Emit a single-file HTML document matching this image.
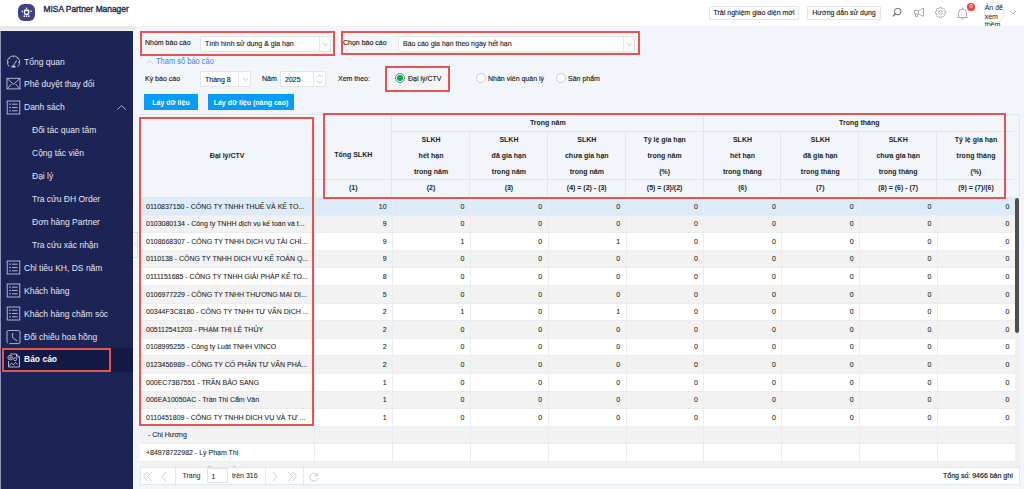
<!DOCTYPE html>
<html><head><meta charset="utf-8">
<style>
*{box-sizing:border-box;margin:0;padding:0}
html,body{width:1024px;height:489px;overflow:hidden;background:#f2f5f9;font-family:"Liberation Sans",sans-serif;color:#333}
.a{position:absolute}
#top{left:0;top:0;width:1024px;height:26px;background:#fff}
#logo{left:18px;top:4px;width:17px;height:17px;border-radius:6px;background:#40418a}
#title{left:43.5px;top:4px;font-size:8.4px;color:#1f2b4d;line-height:11px;-webkit-text-stroke:0.35px #1f2b4d;transform:scaleY(1.1)}
.tbtn{top:6px;height:14px;border:1px solid #e3e5e8;box-shadow:0 0 1px rgba(0,0,0,.06);border-radius:2px;background:#fff;font-size:7px;line-height:12px;text-align:center;color:#161616;-webkit-text-stroke:0.12px #161616}
#strip{left:0;top:26px;width:136px;height:4px;background:#e8e9eb}
#side{left:1px;top:31px;width:132px;height:458px;background:#1c2456}
#sideb{left:0;top:31px;width:1px;height:458px;background:#9096b8}
#gap{left:133px;top:30px;width:3px;height:459px;background:#f7f8fa}
.mtx{font-size:8.5px;line-height:12px;color:#e3e5ef;white-space:nowrap;transform:scaleY(1.1)}
.red{border:2px solid #e65450}
.lbl{font-size:7px;color:#161616;-webkit-text-stroke:0.12px currentColor;line-height:9px;white-space:nowrap;transform:scaleY(1.1)}
.sel{background:#fff;border:1px solid #e3e5e8;border-radius:1px;font-size:7px;line-height:14px;color:#161616;-webkit-text-stroke:0.12px #161616;padding-left:4px;white-space:nowrap}
.sel .dv{position:absolute;top:0;bottom:0;border-left:1px solid #e6e8eb}
.btn{background:#069cf8;color:#fff;font-weight:bold;font-size:7px;line-height:18px;text-align:center;white-space:nowrap}
.radio{width:10px;height:10px;border-radius:50%;border:1px solid #c9ccd1;background:#fff}
.hd{font-size:7px;font-weight:bold;color:#1d1d1d;text-align:center;line-height:10px;white-space:nowrap;transform:scaleY(1.1)}
.cell{font-size:7px;color:#1e1e1e;-webkit-text-stroke:0.08px #1e1e1e;line-height:10px;white-space:nowrap;transform:scaleY(1.1)}
.num{text-align:right;font-weight:normal}
</style></head><body>
<div id="top" class="a"></div>
<div id="logo" class="a"><svg width="17" height="17" viewBox="0 0 17 17"><g fill="#fff"><circle cx="8.5" cy="4.3" r="0.8"/><circle cx="4.3" cy="7.3" r="0.8"/><circle cx="13" cy="7.3" r="0.8"/><rect x="5.6" y="11.4" width="1.4" height="1.6"/><rect x="7.9" y="11.4" width="1.4" height="1.6"/><rect x="10.1" y="11.4" width="1.4" height="1.6"/><path d="M6 5.8h1.2v1H6zM9.9 5.8h1.2v1H9.9z"/></g><circle cx="8.6" cy="8.2" r="2.2" fill="none" stroke="#fff" stroke-width="1.3"/></svg></div>
<div id="title" class="a">MISA Partner Manager</div>
<div class="a tbtn" style="left:709px;width:90px"><span style="display:inline-block;transform:scaleY(1.1)">Trải nghiệm giao diện mới</span></div>
<div class="a tbtn" style="left:807px;width:74px"><span style="display:inline-block;transform:scaleY(1.1)">Hướng dẫn sử dụng</span></div>

<div id="strip" class="a"></div>
<div id="gap" class="a"></div>
<div id="sideb" class="a"></div>
<div id="side" class="a"></div>

<!-- content -->
<div class="a red" style="left:140px;top:31px;width:195px;height:25px"></div>
<div class="a lbl" style="left:145px;top:38px">Nhóm báo cáo</div>
<div class="a sel" style="left:200px;top:36px;width:131px;height:16px">Tình hình sử dụng &amp; gia hạn<span class="dv" style="left:118px"></span></div>

<div class="a red" style="left:341px;top:31px;width:299px;height:24px"></div>
<div class="a lbl" style="left:343px;top:38px">Chọn báo cáo</div>
<div class="a sel" style="left:398px;top:36px;width:237px;height:16px">Báo cáo gia hạn theo ngày hết hạn<span class="dv" style="left:224px"></span></div>

<div class="a lbl" style="left:156px;top:56.8px;color:#3b8ad8;font-size:7.5px;-webkit-text-stroke:0">Tham số báo cáo</div>

<div class="a lbl" style="left:145px;top:74px">Kỳ báo cáo</div>
<div class="a sel" style="left:200px;top:71px;width:51px;height:16px;line-height:15px">Tháng 8<span class="dv" style="left:37px"></span></div>
<div class="a lbl" style="left:262px;top:74px">Năm</div>
<div class="a sel" style="left:280px;top:71px;width:46px;height:16px;line-height:15px">2025<span class="dv" style="left:32px"></span></div>
<div class="a lbl" style="left:338px;top:74px">Xem theo:</div>
<div class="a red" style="left:385px;top:66px;width:65px;height:26px"></div>
<div class="a radio" style="left:395px;top:73px;border-color:#27a86a"><div style="position:absolute;left:1.2px;top:1.2px;width:5.6px;height:5.6px;border-radius:50%;background:#17a05c"></div></div>
<div class="a lbl" style="left:408px;top:74px">Đại lý/CTV</div>
<div class="a radio" style="left:476px;top:73px"></div>
<div class="a lbl" style="left:488px;top:74px">Nhân viên quản lý</div>
<div class="a radio" style="left:556px;top:73px"></div>
<div class="a lbl" style="left:568px;top:74px">Sản phẩm</div>

<div class="a btn" style="left:144px;top:94px;width:54px;height:16px">Lấy dữ liệu</div>
<div class="a btn" style="left:208px;top:94px;width:86px;height:16px">Lấy dữ liệu (nâng cao)</div>


<div class="a mtx" style="left:24px;top:55.5px">Tổng quan</div>
<div class="a" style="left:6px;top:54.0px"><svg width="15" height="15" viewBox="0 0 15 15"><g fill="none" stroke="#c9cce0" stroke-width="0.85"><path d="M3.2 12.6A6.2 6.2 0 1 1 11.8 12.6"/><path d="M7.5 2.3v1.1M3.4 4l.8.8M11.6 4l-.8.8M1.9 8.2h1.1M13.1 8.2h-1.1"/><path d="M7.6 11.2l2.8-4.3"/></g><path d="M5.3 13.4a2.2 2.2 0 0 1 4.4 0z" fill="#c9cce0"/><path d="M9.2 7.4l1.6-1.3-.6 2z" fill="#c9cce0"/></svg></div>
<div class="a mtx" style="left:24px;top:78.42px">Phê duyệt thay đổi</div>
<div class="a" style="left:6px;top:76.92px"><svg width="15" height="15" viewBox="0 0 15 15"><g fill="none" stroke="#c9cce0" stroke-width="0.85"><rect x="1" y="1.3" width="13" height="10.6"/><path d="M1.2 1.6l6.3 5.7 6.3-5.7M1.3 11.6l4.2-4.6M13.7 11.6l-4.2-4.6"/></g></svg></div>
<div class="a mtx" style="left:24px;top:101.34px">Danh sách</div>
<div class="a" style="left:6px;top:99.84px"><svg width="15" height="15" viewBox="0 0 15 15"><g fill="none" stroke="#c9cce0" stroke-width="0.85"><rect x="1.2" y="1" width="12.6" height="13"/><path d="M6 4.2h5.5M6 7.5h5.5M6 10.8h5.5"/></g><g fill="#c9cce0"><rect x="3.4" y="3.6" width="1.3" height="1.2"/><rect x="3.4" y="6.9" width="1.3" height="1.2"/><rect x="3.4" y="10.2" width="1.3" height="1.2"/></g></svg></div>
<div class="a mtx" style="left:32px;top:124.25999999999999px">Đối tác quan tâm</div>
<div class="a mtx" style="left:32px;top:147.18px">Cộng tác viên</div>
<div class="a mtx" style="left:32px;top:170.10000000000002px">Đại lý</div>
<div class="a mtx" style="left:32px;top:193.02px">Tra cứu ĐH Order</div>
<div class="a mtx" style="left:32px;top:215.94px">Đơn hàng Partner</div>
<div class="a mtx" style="left:32px;top:238.86px">Tra cứu xác nhận</div>
<div class="a mtx" style="left:24px;top:261.78000000000003px">Chỉ tiêu KH, DS năm</div>
<div class="a" style="left:6px;top:260.28000000000003px"><svg width="15" height="15" viewBox="0 0 15 15"><g fill="none" stroke="#c9cce0" stroke-width="0.85"><rect x="1.2" y="1" width="12.6" height="13"/><path d="M6 4.2h5.5M6 7.5h5.5M6 10.8h5.5"/></g><g fill="#c9cce0"><rect x="3.4" y="3.6" width="1.3" height="1.2"/><rect x="3.4" y="6.9" width="1.3" height="1.2"/><rect x="3.4" y="10.2" width="1.3" height="1.2"/></g></svg></div>
<div class="a mtx" style="left:24px;top:284.70000000000005px">Khách hàng</div>
<div class="a" style="left:6px;top:283.20000000000005px"><svg width="15" height="15" viewBox="0 0 15 15"><g fill="none" stroke="#c9cce0" stroke-width="0.85"><rect x="1.2" y="1" width="12.6" height="13"/><path d="M6 4.2h5.5M6 7.5h5.5M6 10.8h5.5"/></g><g fill="#c9cce0"><rect x="3.4" y="3.6" width="1.3" height="1.2"/><rect x="3.4" y="6.9" width="1.3" height="1.2"/><rect x="3.4" y="10.2" width="1.3" height="1.2"/></g></svg></div>
<div class="a mtx" style="left:24px;top:307.62px">Khách hàng chăm sóc</div>
<div class="a" style="left:6px;top:306.12px"><svg width="15" height="15" viewBox="0 0 15 15"><g fill="none" stroke="#c9cce0" stroke-width="0.85"><rect x="1.2" y="1" width="12.6" height="13"/><path d="M6 4.2h5.5M6 7.5h5.5M6 10.8h5.5"/></g><g fill="#c9cce0"><rect x="3.4" y="3.6" width="1.3" height="1.2"/><rect x="3.4" y="6.9" width="1.3" height="1.2"/><rect x="3.4" y="10.2" width="1.3" height="1.2"/></g></svg></div>
<div class="a mtx" style="left:24px;top:330.54px">Đối chiếu hoa hồng</div>
<div class="a" style="left:6px;top:329.04px"><svg width="15" height="16" viewBox="0 0 15 16"><g fill="none" stroke="#c9cce0" stroke-width="0.85"><path d="M3.4 14.6H12.4a1.6 1.6 0 0 0 1.6-1.6V3.1a1.6 1.6 0 0 0-1.6-1.6H2.6A1.6 1.6 0 0 0 1 3.1V12.6a1.6 1.6 0 0 0 1 1.5"/><path d="M6.6 4v4.7l4.8 3.3"/></g></svg></div>
<svg class="a" style="left:116px;top:104px" width="11" height="7" viewBox="0 0 11 7"><path d="M1.2 5.6l4.4-4L9.9 5.6" fill="none" stroke="#a7acca" stroke-width="1"/></svg>
<div class="a" style="left:1px;top:348px;width:132px;height:24px;background:#141a46"></div>
<div class="a" style="left:0px;top:348px;width:1px;height:24px;background:#7f88c4"></div>
<div class="a" style="left:6px;top:352.5px"><svg width="15" height="15" viewBox="0 0 15 15"><g fill="none" stroke="#c9cce0" stroke-width="0.85"><path d="M4 1H10.5L13.5 4V14H2.5V8"/><path d="M10.5 1V4H13.5"/><circle cx="4.2" cy="4.6" r="2.3"/><circle cx="4.2" cy="4.6" r="0.8"/><circle cx="9.2" cy="6.2" r="1.5"/><path d="M3.2 12.8l2.2-2.6 2 1.8 2.2-2.6 2.2 2.2"/></g></svg></div>
<div class="a mtx" style="left:24px;top:353px;font-weight:bold;color:#fff">Báo cáo</div>
<div class="a red" style="left:2px;top:348px;width:109px;height:24px"></div>
<div class="a" style="left:140px;top:114px;width:879.5px;height:353.3px;background:#f2f5f9;border-top:1px solid #e3e6ea;border-right:1px solid #e3e6ea"></div>
<div class="a" style="left:314.3px;top:114px;width:1px;height:83.30000000000001px;background:#e3e6ea"></div>
<div class="a" style="left:314.3px;top:179px;width:699.7px;height:1px;background:#e3e6ea"></div>
<div class="a" style="left:391px;top:131px;width:623px;height:1px;background:#e3e6ea"></div>
<div class="a" style="left:391px;top:114px;width:1px;height:83.30000000000001px;background:#e3e6ea"></div>
<div class="a" style="left:469px;top:131px;width:1px;height:66.30000000000001px;background:#e3e6ea"></div>
<div class="a" style="left:547px;top:131px;width:1px;height:66.30000000000001px;background:#e3e6ea"></div>
<div class="a" style="left:625px;top:131px;width:1px;height:66.30000000000001px;background:#e3e6ea"></div>
<div class="a" style="left:703px;top:114px;width:1px;height:83.30000000000001px;background:#e3e6ea"></div>
<div class="a" style="left:780px;top:131px;width:1px;height:66.30000000000001px;background:#e3e6ea"></div>
<div class="a" style="left:858px;top:131px;width:1px;height:66.30000000000001px;background:#e3e6ea"></div>
<div class="a" style="left:936px;top:131px;width:1px;height:66.30000000000001px;background:#e3e6ea"></div>
<div class="a hd" style="left:140px;top:150.6px;width:174.3px">Đại lý/CTV</div>
<div class="a hd" style="left:314.3px;top:150px;width:77.84999999999997px">Tổng SLKH</div>
<div class="a hd" style="left:314.3px;top:183px;width:77.84999999999997px">(1)</div>
<div class="a hd" style="left:392.15px;top:118px;width:311.4px">Trong năm</div>
<div class="a hd" style="left:703.55px;top:118px;width:311.4000000000001px">Trong tháng</div>
<div class="a hd" style="left:392.15px;top:135px;width:77.85000000000002px">SLKH</div>
<div class="a hd" style="left:392.15px;top:150.9px;width:77.85000000000002px">hết hạn</div>
<div class="a hd" style="left:392.15px;top:166.9px;width:77.85000000000002px">trong năm</div>
<div class="a hd" style="left:392.15px;top:183px;width:77.85000000000002px">(2)</div>
<div class="a hd" style="left:470.0px;top:135px;width:77.85000000000002px">SLKH</div>
<div class="a hd" style="left:470.0px;top:150.9px;width:77.85000000000002px">đã gia hạn</div>
<div class="a hd" style="left:470.0px;top:166.9px;width:77.85000000000002px">trong năm</div>
<div class="a hd" style="left:470.0px;top:183px;width:77.85000000000002px">(3)</div>
<div class="a hd" style="left:547.85px;top:135px;width:77.85000000000002px">SLKH</div>
<div class="a hd" style="left:547.85px;top:150.9px;width:77.85000000000002px">chưa gia hạn</div>
<div class="a hd" style="left:547.85px;top:166.9px;width:77.85000000000002px">trong năm</div>
<div class="a hd" style="left:547.85px;top:183px;width:77.85000000000002px">(4) = (2) - (3)</div>
<div class="a hd" style="left:625.7px;top:135px;width:77.84999999999991px">Tỷ lệ gia hạn</div>
<div class="a hd" style="left:625.7px;top:150.9px;width:77.84999999999991px">trong năm</div>
<div class="a hd" style="left:625.7px;top:166.9px;width:77.84999999999991px">(%)</div>
<div class="a hd" style="left:625.7px;top:183px;width:77.84999999999991px">(5) = (3)/(2)</div>
<div class="a hd" style="left:703.55px;top:135px;width:77.85000000000002px">SLKH</div>
<div class="a hd" style="left:703.55px;top:150.9px;width:77.85000000000002px">hết hạn</div>
<div class="a hd" style="left:703.55px;top:166.9px;width:77.85000000000002px">trong tháng</div>
<div class="a hd" style="left:703.55px;top:183px;width:77.85000000000002px">(6)</div>
<div class="a hd" style="left:781.4px;top:135px;width:77.85000000000002px">SLKH</div>
<div class="a hd" style="left:781.4px;top:150.9px;width:77.85000000000002px">đã gia hạn</div>
<div class="a hd" style="left:781.4px;top:166.9px;width:77.85000000000002px">trong tháng</div>
<div class="a hd" style="left:781.4px;top:183px;width:77.85000000000002px">(7)</div>
<div class="a hd" style="left:859.25px;top:135px;width:77.84999999999991px">SLKH</div>
<div class="a hd" style="left:859.25px;top:150.9px;width:77.84999999999991px">chưa gia hạn</div>
<div class="a hd" style="left:859.25px;top:166.9px;width:77.84999999999991px">trong tháng</div>
<div class="a hd" style="left:859.25px;top:183px;width:77.84999999999991px">(8) = (6) - (7)</div>
<div class="a hd" style="left:937.0999999999999px;top:135px;width:77.85000000000014px">Tỷ lệ gia hạn</div>
<div class="a hd" style="left:937.0999999999999px;top:150.9px;width:77.85000000000014px">trong tháng</div>
<div class="a hd" style="left:937.0999999999999px;top:166.9px;width:77.85000000000014px">(%)</div>
<div class="a hd" style="left:937.0999999999999px;top:183px;width:77.85000000000014px">(9) = (7)/(6)</div>
<div class="a" style="left:140px;top:197.3px;width:875px;height:270.0px;overflow:hidden">
<div class="a" style="left:0;top:0.0px;width:875px;height:18.1px;background:#dcebf9"></div>
<div class="a" style="left:0;top:17.6px;width:875px;height:18.1px;background:#f2f2f2"></div>
<div class="a" style="left:0;top:35.2px;width:875px;height:18.1px;background:#ffffff"></div>
<div class="a" style="left:0;top:52.800000000000004px;width:875px;height:18.1px;background:#f2f2f2"></div>
<div class="a" style="left:0;top:70.4px;width:875px;height:18.1px;background:#ffffff"></div>
<div class="a" style="left:0;top:88.0px;width:875px;height:18.1px;background:#f2f2f2"></div>
<div class="a" style="left:0;top:105.60000000000001px;width:875px;height:18.1px;background:#ffffff"></div>
<div class="a" style="left:0;top:123.20000000000002px;width:875px;height:18.1px;background:#f2f2f2"></div>
<div class="a" style="left:0;top:140.8px;width:875px;height:18.1px;background:#ffffff"></div>
<div class="a" style="left:0;top:158.4px;width:875px;height:18.1px;background:#f2f2f2"></div>
<div class="a" style="left:0;top:176.0px;width:875px;height:18.1px;background:#ffffff"></div>
<div class="a" style="left:0;top:193.60000000000002px;width:875px;height:18.1px;background:#f2f2f2"></div>
<div class="a" style="left:0;top:211.20000000000002px;width:875px;height:18.1px;background:#ffffff"></div>
<div class="a" style="left:0;top:228.8px;width:875px;height:18.1px;background:#f2f2f2"></div>
<div class="a" style="left:0;top:246.40000000000003px;width:875px;height:18.1px;background:#ffffff"></div>
<div class="a" style="left:0;top:264.0px;width:875px;height:18.1px;background:#f2f2f2"></div>
<div class="a" style="left:0;top:17.69999999999999px;width:875px;height:1px;background:#ebecef"></div>
<div class="a" style="left:0;top:34.69999999999999px;width:875px;height:1px;background:#ebecef"></div>
<div class="a" style="left:0;top:52.69999999999999px;width:875px;height:1px;background:#ebecef"></div>
<div class="a" style="left:0;top:69.69999999999999px;width:875px;height:1px;background:#ebecef"></div>
<div class="a" style="left:0;top:87.69999999999999px;width:875px;height:1px;background:#ebecef"></div>
<div class="a" style="left:0;top:105.69999999999999px;width:875px;height:1px;background:#ebecef"></div>
<div class="a" style="left:0;top:122.69999999999999px;width:875px;height:1px;background:#ebecef"></div>
<div class="a" style="left:0;top:140.7px;width:875px;height:1px;background:#ebecef"></div>
<div class="a" style="left:0;top:157.7px;width:875px;height:1px;background:#ebecef"></div>
<div class="a" style="left:0;top:175.7px;width:875px;height:1px;background:#ebecef"></div>
<div class="a" style="left:0;top:193.7px;width:875px;height:1px;background:#ebecef"></div>
<div class="a" style="left:0;top:210.7px;width:875px;height:1px;background:#ebecef"></div>
<div class="a" style="left:0;top:228.7px;width:875px;height:1px;background:#ebecef"></div>
<div class="a" style="left:0;top:245.7px;width:875px;height:1px;background:#ebecef"></div>
<div class="a" style="left:0;top:263.7px;width:875px;height:1px;background:#ebecef"></div>
<div class="a" style="left:0;top:281.7px;width:875px;height:1px;background:#ebecef"></div>
<div class="a" style="left:174px;top:0;width:1px;height:270.0px;background:#eaecf1"></div>
<div class="a" style="left:252px;top:0;width:1px;height:270.0px;background:#eaecf1"></div>
<div class="a" style="left:330px;top:0;width:1px;height:270.0px;background:#eaecf1"></div>
<div class="a" style="left:408px;top:0;width:1px;height:270.0px;background:#eaecf1"></div>
<div class="a" style="left:486px;top:0;width:1px;height:270.0px;background:#eaecf1"></div>
<div class="a" style="left:563px;top:0;width:1px;height:270.0px;background:#eaecf1"></div>
<div class="a" style="left:641px;top:0;width:1px;height:270.0px;background:#eaecf1"></div>
<div class="a" style="left:719px;top:0;width:1px;height:270.0px;background:#eaecf1"></div>
<div class="a" style="left:797px;top:0;width:1px;height:270.0px;background:#eaecf1"></div>
<div class="a cell" style="left:6px;top:4.3px">0110837150 - CÔNG TY TNHH THUẾ VÀ KẾ TO...</div>
<div class="a cell num" style="left:174.3px;top:4.3px;width:72.24999999999997px">10</div>
<div class="a cell num" style="left:252.14999999999998px;top:4.3px;width:72.25000000000003px">0</div>
<div class="a cell num" style="left:330.0px;top:4.3px;width:72.25000000000003px">0</div>
<div class="a cell num" style="left:407.85px;top:4.3px;width:72.25000000000003px">0</div>
<div class="a cell num" style="left:485.70000000000005px;top:4.3px;width:72.24999999999991px">0</div>
<div class="a cell num" style="left:563.55px;top:4.3px;width:72.25000000000003px">0</div>
<div class="a cell num" style="left:641.4px;top:4.3px;width:72.25000000000003px">0</div>
<div class="a cell num" style="left:719.25px;top:4.3px;width:72.24999999999991px">0</div>
<div class="a cell num" style="left:797.0999999999999px;top:4.3px;width:72.25000000000014px">0</div>
<div class="a cell" style="left:6px;top:21.900000000000002px">0103080134 - Công ty TNHH dịch vụ kế toán và t...</div>
<div class="a cell num" style="left:174.3px;top:21.900000000000002px;width:72.24999999999997px">9</div>
<div class="a cell num" style="left:252.14999999999998px;top:21.900000000000002px;width:72.25000000000003px">0</div>
<div class="a cell num" style="left:330.0px;top:21.900000000000002px;width:72.25000000000003px">0</div>
<div class="a cell num" style="left:407.85px;top:21.900000000000002px;width:72.25000000000003px">0</div>
<div class="a cell num" style="left:485.70000000000005px;top:21.900000000000002px;width:72.24999999999991px">0</div>
<div class="a cell num" style="left:563.55px;top:21.900000000000002px;width:72.25000000000003px">0</div>
<div class="a cell num" style="left:641.4px;top:21.900000000000002px;width:72.25000000000003px">0</div>
<div class="a cell num" style="left:719.25px;top:21.900000000000002px;width:72.24999999999991px">0</div>
<div class="a cell num" style="left:797.0999999999999px;top:21.900000000000002px;width:72.25000000000014px">0</div>
<div class="a cell" style="left:6px;top:39.5px">0108668307 - CÔNG TY TNHH DỊCH VỤ TÀI CHÍ...</div>
<div class="a cell num" style="left:174.3px;top:39.5px;width:72.24999999999997px">9</div>
<div class="a cell num" style="left:252.14999999999998px;top:39.5px;width:72.25000000000003px">1</div>
<div class="a cell num" style="left:330.0px;top:39.5px;width:72.25000000000003px">0</div>
<div class="a cell num" style="left:407.85px;top:39.5px;width:72.25000000000003px">1</div>
<div class="a cell num" style="left:485.70000000000005px;top:39.5px;width:72.24999999999991px">0</div>
<div class="a cell num" style="left:563.55px;top:39.5px;width:72.25000000000003px">0</div>
<div class="a cell num" style="left:641.4px;top:39.5px;width:72.25000000000003px">0</div>
<div class="a cell num" style="left:719.25px;top:39.5px;width:72.24999999999991px">0</div>
<div class="a cell num" style="left:797.0999999999999px;top:39.5px;width:72.25000000000014px">0</div>
<div class="a cell" style="left:6px;top:57.1px">0110138 - CÔNG TY TNHH DỊCH VỤ KẾ TOÁN Q...</div>
<div class="a cell num" style="left:174.3px;top:57.1px;width:72.24999999999997px">9</div>
<div class="a cell num" style="left:252.14999999999998px;top:57.1px;width:72.25000000000003px">0</div>
<div class="a cell num" style="left:330.0px;top:57.1px;width:72.25000000000003px">0</div>
<div class="a cell num" style="left:407.85px;top:57.1px;width:72.25000000000003px">0</div>
<div class="a cell num" style="left:485.70000000000005px;top:57.1px;width:72.24999999999991px">0</div>
<div class="a cell num" style="left:563.55px;top:57.1px;width:72.25000000000003px">0</div>
<div class="a cell num" style="left:641.4px;top:57.1px;width:72.25000000000003px">0</div>
<div class="a cell num" style="left:719.25px;top:57.1px;width:72.24999999999991px">0</div>
<div class="a cell num" style="left:797.0999999999999px;top:57.1px;width:72.25000000000014px">0</div>
<div class="a cell" style="left:6px;top:74.7px">0111151685 - CÔNG TY TNHH GIẢI PHÁP KẾ TO...</div>
<div class="a cell num" style="left:174.3px;top:74.7px;width:72.24999999999997px">8</div>
<div class="a cell num" style="left:252.14999999999998px;top:74.7px;width:72.25000000000003px">0</div>
<div class="a cell num" style="left:330.0px;top:74.7px;width:72.25000000000003px">0</div>
<div class="a cell num" style="left:407.85px;top:74.7px;width:72.25000000000003px">0</div>
<div class="a cell num" style="left:485.70000000000005px;top:74.7px;width:72.24999999999991px">0</div>
<div class="a cell num" style="left:563.55px;top:74.7px;width:72.25000000000003px">0</div>
<div class="a cell num" style="left:641.4px;top:74.7px;width:72.25000000000003px">0</div>
<div class="a cell num" style="left:719.25px;top:74.7px;width:72.24999999999991px">0</div>
<div class="a cell num" style="left:797.0999999999999px;top:74.7px;width:72.25000000000014px">0</div>
<div class="a cell" style="left:6px;top:92.3px">0106977229 - CÔNG TY TNHH THƯƠNG MẠI DỊ...</div>
<div class="a cell num" style="left:174.3px;top:92.3px;width:72.24999999999997px">5</div>
<div class="a cell num" style="left:252.14999999999998px;top:92.3px;width:72.25000000000003px">0</div>
<div class="a cell num" style="left:330.0px;top:92.3px;width:72.25000000000003px">0</div>
<div class="a cell num" style="left:407.85px;top:92.3px;width:72.25000000000003px">0</div>
<div class="a cell num" style="left:485.70000000000005px;top:92.3px;width:72.24999999999991px">0</div>
<div class="a cell num" style="left:563.55px;top:92.3px;width:72.25000000000003px">0</div>
<div class="a cell num" style="left:641.4px;top:92.3px;width:72.25000000000003px">0</div>
<div class="a cell num" style="left:719.25px;top:92.3px;width:72.24999999999991px">0</div>
<div class="a cell num" style="left:797.0999999999999px;top:92.3px;width:72.25000000000014px">0</div>
<div class="a cell" style="left:6px;top:109.9px">00344F3C8180 - CÔNG TY TNHH TƯ VẤN DỊCH ...</div>
<div class="a cell num" style="left:174.3px;top:109.9px;width:72.24999999999997px">2</div>
<div class="a cell num" style="left:252.14999999999998px;top:109.9px;width:72.25000000000003px">1</div>
<div class="a cell num" style="left:330.0px;top:109.9px;width:72.25000000000003px">0</div>
<div class="a cell num" style="left:407.85px;top:109.9px;width:72.25000000000003px">1</div>
<div class="a cell num" style="left:485.70000000000005px;top:109.9px;width:72.24999999999991px">0</div>
<div class="a cell num" style="left:563.55px;top:109.9px;width:72.25000000000003px">0</div>
<div class="a cell num" style="left:641.4px;top:109.9px;width:72.25000000000003px">0</div>
<div class="a cell num" style="left:719.25px;top:109.9px;width:72.24999999999991px">0</div>
<div class="a cell num" style="left:797.0999999999999px;top:109.9px;width:72.25000000000014px">0</div>
<div class="a cell" style="left:6px;top:127.50000000000001px">005112541203 - PHẠM THỊ LỆ THỦY</div>
<div class="a cell num" style="left:174.3px;top:127.50000000000001px;width:72.24999999999997px">2</div>
<div class="a cell num" style="left:252.14999999999998px;top:127.50000000000001px;width:72.25000000000003px">0</div>
<div class="a cell num" style="left:330.0px;top:127.50000000000001px;width:72.25000000000003px">0</div>
<div class="a cell num" style="left:407.85px;top:127.50000000000001px;width:72.25000000000003px">0</div>
<div class="a cell num" style="left:485.70000000000005px;top:127.50000000000001px;width:72.24999999999991px">0</div>
<div class="a cell num" style="left:563.55px;top:127.50000000000001px;width:72.25000000000003px">0</div>
<div class="a cell num" style="left:641.4px;top:127.50000000000001px;width:72.25000000000003px">0</div>
<div class="a cell num" style="left:719.25px;top:127.50000000000001px;width:72.24999999999991px">0</div>
<div class="a cell num" style="left:797.0999999999999px;top:127.50000000000001px;width:72.25000000000014px">0</div>
<div class="a cell" style="left:6px;top:145.10000000000002px">0108995255 - Công ty Luật TNHH VINCO</div>
<div class="a cell num" style="left:174.3px;top:145.10000000000002px;width:72.24999999999997px">2</div>
<div class="a cell num" style="left:252.14999999999998px;top:145.10000000000002px;width:72.25000000000003px">0</div>
<div class="a cell num" style="left:330.0px;top:145.10000000000002px;width:72.25000000000003px">0</div>
<div class="a cell num" style="left:407.85px;top:145.10000000000002px;width:72.25000000000003px">0</div>
<div class="a cell num" style="left:485.70000000000005px;top:145.10000000000002px;width:72.24999999999991px">0</div>
<div class="a cell num" style="left:563.55px;top:145.10000000000002px;width:72.25000000000003px">0</div>
<div class="a cell num" style="left:641.4px;top:145.10000000000002px;width:72.25000000000003px">0</div>
<div class="a cell num" style="left:719.25px;top:145.10000000000002px;width:72.24999999999991px">0</div>
<div class="a cell num" style="left:797.0999999999999px;top:145.10000000000002px;width:72.25000000000014px">0</div>
<div class="a cell" style="left:6px;top:162.70000000000002px">0123456989 - CÔNG TY CỔ PHẦN TƯ VẤN PHÁ...</div>
<div class="a cell num" style="left:174.3px;top:162.70000000000002px;width:72.24999999999997px">2</div>
<div class="a cell num" style="left:252.14999999999998px;top:162.70000000000002px;width:72.25000000000003px">0</div>
<div class="a cell num" style="left:330.0px;top:162.70000000000002px;width:72.25000000000003px">0</div>
<div class="a cell num" style="left:407.85px;top:162.70000000000002px;width:72.25000000000003px">0</div>
<div class="a cell num" style="left:485.70000000000005px;top:162.70000000000002px;width:72.24999999999991px">0</div>
<div class="a cell num" style="left:563.55px;top:162.70000000000002px;width:72.25000000000003px">0</div>
<div class="a cell num" style="left:641.4px;top:162.70000000000002px;width:72.25000000000003px">0</div>
<div class="a cell num" style="left:719.25px;top:162.70000000000002px;width:72.24999999999991px">0</div>
<div class="a cell num" style="left:797.0999999999999px;top:162.70000000000002px;width:72.25000000000014px">0</div>
<div class="a cell" style="left:6px;top:180.3px">000EC73B7551 - TRẦN BẢO SANG</div>
<div class="a cell num" style="left:174.3px;top:180.3px;width:72.24999999999997px">1</div>
<div class="a cell num" style="left:252.14999999999998px;top:180.3px;width:72.25000000000003px">0</div>
<div class="a cell num" style="left:330.0px;top:180.3px;width:72.25000000000003px">0</div>
<div class="a cell num" style="left:407.85px;top:180.3px;width:72.25000000000003px">0</div>
<div class="a cell num" style="left:485.70000000000005px;top:180.3px;width:72.24999999999991px">0</div>
<div class="a cell num" style="left:563.55px;top:180.3px;width:72.25000000000003px">0</div>
<div class="a cell num" style="left:641.4px;top:180.3px;width:72.25000000000003px">0</div>
<div class="a cell num" style="left:719.25px;top:180.3px;width:72.24999999999991px">0</div>
<div class="a cell num" style="left:797.0999999999999px;top:180.3px;width:72.25000000000014px">0</div>
<div class="a cell" style="left:6px;top:197.90000000000003px">006EA10050AC - Trần Thị Cẩm Vân</div>
<div class="a cell num" style="left:174.3px;top:197.90000000000003px;width:72.24999999999997px">1</div>
<div class="a cell num" style="left:252.14999999999998px;top:197.90000000000003px;width:72.25000000000003px">0</div>
<div class="a cell num" style="left:330.0px;top:197.90000000000003px;width:72.25000000000003px">0</div>
<div class="a cell num" style="left:407.85px;top:197.90000000000003px;width:72.25000000000003px">0</div>
<div class="a cell num" style="left:485.70000000000005px;top:197.90000000000003px;width:72.24999999999991px">0</div>
<div class="a cell num" style="left:563.55px;top:197.90000000000003px;width:72.25000000000003px">0</div>
<div class="a cell num" style="left:641.4px;top:197.90000000000003px;width:72.25000000000003px">0</div>
<div class="a cell num" style="left:719.25px;top:197.90000000000003px;width:72.24999999999991px">0</div>
<div class="a cell num" style="left:797.0999999999999px;top:197.90000000000003px;width:72.25000000000014px">0</div>
<div class="a cell" style="left:6px;top:215.50000000000003px">0110451809 - CÔNG TY TNHH DỊCH VỤ VÀ TƯ ...</div>
<div class="a cell num" style="left:174.3px;top:215.50000000000003px;width:72.24999999999997px">1</div>
<div class="a cell num" style="left:252.14999999999998px;top:215.50000000000003px;width:72.25000000000003px">0</div>
<div class="a cell num" style="left:330.0px;top:215.50000000000003px;width:72.25000000000003px">0</div>
<div class="a cell num" style="left:407.85px;top:215.50000000000003px;width:72.25000000000003px">0</div>
<div class="a cell num" style="left:485.70000000000005px;top:215.50000000000003px;width:72.24999999999991px">0</div>
<div class="a cell num" style="left:563.55px;top:215.50000000000003px;width:72.25000000000003px">0</div>
<div class="a cell num" style="left:641.4px;top:215.50000000000003px;width:72.25000000000003px">0</div>
<div class="a cell num" style="left:719.25px;top:215.50000000000003px;width:72.24999999999991px">0</div>
<div class="a cell num" style="left:797.0999999999999px;top:215.50000000000003px;width:72.25000000000014px">0</div>
<div class="a cell" style="left:8px;top:233.10000000000002px">- Chị Hương</div>
<div class="a cell" style="left:6px;top:250.70000000000005px">+84978722982 - Lý Phạm Thị</div>
<div class="a cell" style="left:6px;top:268.3px">0987654321 - Nguyễn Văn Ánh</div>
</div>
<div class="a" style="left:1015px;top:197.3px;width:4.5px;height:270.0px;background:#f0f0f0"></div>
<div class="a" style="left:1015px;top:197.5px;width:4px;height:135.5px;background:#4d4d4d;border-radius:2px"></div>
<div class="a" style="left:140px;top:467.3px;width:879.5px;height:17.69999999999999px;background:#fff;border:1px solid #e3e6ea"></div>
<div class="a" style="left:175.1px;top:468px;width:1px;height:16.5px;background:#e6e8eb"></div>
<div class="a" style="left:264.6px;top:468px;width:1px;height:16.5px;background:#e6e8eb"></div>
<div class="a" style="left:303.2px;top:468px;width:1px;height:16.5px;background:#e6e8eb"></div>
<svg class="a" style="left:142px;top:471px" width="11" height="11" viewBox="0 0 11 11"><path d="M5.5 1L1.5 5.5 5.5 10M9.5 1L5.5 5.5 9.5 10" fill="none" stroke="#c4c4c4" stroke-width="0.9"/></svg>
<svg class="a" style="left:160px;top:471px" width="8" height="11" viewBox="0 0 8 11"><path d="M6 1L2 5.5 6 10" fill="none" stroke="#c4c4c4" stroke-width="0.9"/></svg>
<div class="a cell" style="left:182.4px;top:471px;color:#333">Trang</div>
<div class="a" style="left:207.3px;top:468.3px;width:20.7px;height:15.2px;border:1px solid #e2e4e8;background:#fff"></div>
<div class="a cell" style="left:211.5px;top:471.5px;color:#222">1</div>
<div class="a cell" style="left:231.9px;top:471px;color:#333">trên 316</div>
<svg class="a" style="left:271px;top:471px" width="8" height="11" viewBox="0 0 8 11"><path d="M2 1L6 5.5 2 10" fill="none" stroke="#c4c4c4" stroke-width="0.9"/></svg>
<svg class="a" style="left:287px;top:471px" width="11" height="11" viewBox="0 0 11 11"><path d="M1.5 1L5.5 5.5 1.5 10M5.5 1L9.5 5.5 5.5 10" fill="none" stroke="#c4c4c4" stroke-width="0.9"/></svg>
<svg class="a" style="left:309px;top:471.5px" width="10" height="10" viewBox="0 0 10 10"><path d="M8.3 3.2A4 4 0 1 0 8.6 6.5" fill="none" stroke="#c4c4c4" stroke-width="0.9"/><path d="M8.6 0.8v2.8H5.8" fill="none" stroke="#c4c4c4" stroke-width="0.9"/></svg>
<div class="a cell" style="left:900px;top:471px;width:112.7px;text-align:right;color:#1a1a1a;-webkit-text-stroke:0.18px #1a1a1a">Tổng số: 9466 bản ghi</div>
<div class="a red" style="left:139px;top:117px;width:175px;height:308.5px"></div>
<div class="a red" style="left:323px;top:113px;width:683px;height:85.5px"></div>
<div class="a" style="left:133px;top:232px;width:4.5px;height:25.5px;border:1px solid #dcdde0;border-left:none;background:#f6f7f9"></div>
<svg class="a" style="left:134px;top:241px" width="3" height="6" viewBox="0 0 3 6"><path d="M2.5 .5L.6 3l1.9 2.5" fill="none" stroke="#d0d2d6" stroke-width="0.6"/></svg>
<svg class="a" style="left:321.5px;top:41.5px" width="7" height="5" viewBox="0 0 7 5"><path d="M1 1.2l2.5 2.5L6 1.2" fill="none" stroke="#b5b8bd" stroke-width="0.8"/></svg>
<svg class="a" style="left:625.5px;top:41.5px" width="7" height="5" viewBox="0 0 7 5"><path d="M1 1.2l2.5 2.5L6 1.2" fill="none" stroke="#b5b8bd" stroke-width="0.8"/></svg>
<svg class="a" style="left:241.5px;top:76.5px" width="7" height="5" viewBox="0 0 7 5"><path d="M1 1.2l2.5 2.5L6 1.2" fill="none" stroke="#b5b8bd" stroke-width="0.8"/></svg>
<svg class="a" style="left:316px;top:73px" width="7" height="12" viewBox="0 0 7 12"><path d="M1 4.2l2.5-2.5L6 4.2M1 7.8l2.5 2.5L6 7.8" fill="none" stroke="#b5b8bd" stroke-width="0.8"/></svg>
<svg class="a" style="left:146px;top:58.7px" width="8" height="6" viewBox="0 0 8 6"><path d="M1 4.8l3-3 3 3" fill="none" stroke="#c2c5ca" stroke-width="0.8"/></svg>
<svg class="a" style="left:891px;top:6px" width="12" height="12" viewBox="0 0 12 12"><circle cx="6.7" cy="5.6" r="3.3" fill="none" stroke="#5f646a" stroke-width="1"/><path d="M4.4 8L2.2 10.2" stroke="#5f646a" stroke-width="1.1" stroke-linecap="round"/></svg>
<svg class="a" style="left:913px;top:7px" width="12" height="11" viewBox="0 0 12 11"><g fill="none" stroke="#9a9da2" stroke-width="0.8"><path d="M1.5 3.5h4v3.5h-4z"/><path d="M5.5 3.5l5-2.5v8.5l-5-2.5"/><path d="M2.5 7v2.5h2V7"/><path d="M10.5 4v2.5"/></g></svg>
<svg class="a" style="left:934px;top:6.1px" width="13" height="13" viewBox="0 0 13 13"><g fill="none" stroke="#9ea1a6" stroke-width="0.8" stroke-linejoin="round"><path d="M10.42 5.29 L11.63 5.62 L11.63 7.38 L10.42 7.71 L10.13 8.41 L10.75 9.50 L9.50 10.75 L8.41 10.13 L7.71 10.42 L7.38 11.63 L5.62 11.63 L5.29 10.42 L4.59 10.13 L3.50 10.75 L2.25 9.50 L2.87 8.41 L2.58 7.71 L1.37 7.38 L1.37 5.62 L2.58 5.29 L2.87 4.59 L2.25 3.50 L3.50 2.25 L4.59 2.87 L5.29 2.58 L5.62 1.37 L7.38 1.37 L7.71 2.58 L8.41 2.87 L9.50 2.25 L10.75 3.50 L10.13 4.59Z"/><circle cx="6.5" cy="6.5" r="1.9"/></g></svg>
<svg class="a" style="left:956px;top:6.5px" width="13" height="13" viewBox="0 0 13 13"><g fill="none" stroke="#8f9297" stroke-width="0.8"><path d="M2.5 9.5V6a4 4 0 0 1 8 0v3.5l1 1h-10z"/><path d="M5.3 11.5a1.3 1.3 0 0 0 2.4 0"/><path d="M6.5 1v1"/></g></svg>
<div class="a" style="left:967px;top:2.5px;width:8.4px;height:8.4px;border-radius:50%;background:#ef4444;box-shadow:0 0 1px #f99"></div>
<div class="a" style="left:967px;top:3px;width:8.4px;font-size:6px;line-height:7.5px;text-align:center;color:#fff">0</div>
<div class="a" style="left:984px;top:2px;width:21px;height:21px;border-radius:50%;border:1px solid #e3e3e3"></div>
<div class="a" style="left:0;top:0;width:1024px;height:26px;overflow:hidden"><div class="a" style="left:984.7px;top:4px;width:26px;font-size:7px;line-height:8.7px;color:#1a1a1a">Ẩn để<br>xem<br>thêm</div></div>
<svg class="a" style="left:1009px;top:10px" width="8" height="5" viewBox="0 0 8 5"><path d="M1 1l3 3 3-3" fill="none" stroke="#9aa0b0" stroke-width="0.8"/></svg>
</body></html>
